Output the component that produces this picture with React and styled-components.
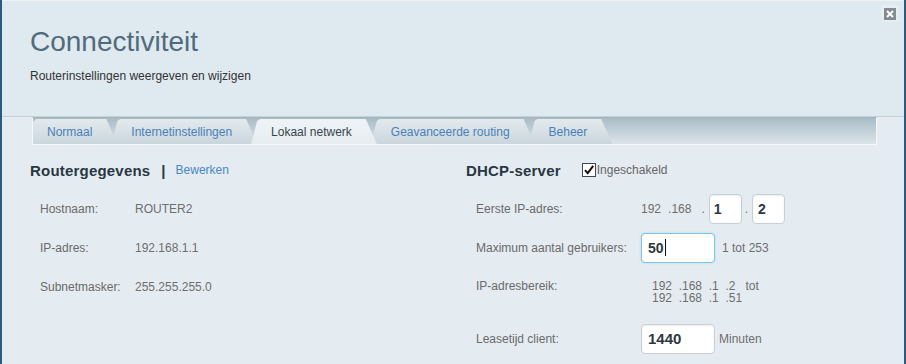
import React from "react";
import styled, { createGlobalStyle } from "styled-components";

const GlobalStyle = createGlobalStyle`
  body {
    margin: 0;
    font-family: "Liberation Sans", Arial, sans-serif;
    background: #e4ecf1;
  }
`;

const Frame = styled.div`
  width: 906px;
  height: 364px;
  box-sizing: border-box;
  border-left: 2px solid #2b5a84;
  border-right: 2px solid #2b5a84;
  background: #e4ecf1;
  overflow: hidden;
`;

const Header = styled.div`
  position: relative;
  height: 117px;
  box-sizing: border-box;
  padding: 25px 28px 0;
  background: #dfe9f0;
  border-top: 1px solid #eef3f6;
  border-bottom: 1px solid #c3d1d9;
`;

const Title = styled.h1`
  margin: 0;
  font-size: 28px;
  line-height: 32px;
  font-weight: 400;
  color: #516b7b;
`;

const Subtitle = styled.div`
  margin-top: 11px;
  font-size: 12px;
  line-height: 14px;
  color: #333;
`;

const CloseButton = styled.div`
  position: absolute;
  top: 4px;
  right: 5px;
  width: 18px;
  height: 17px;
  display: flex;
  align-items: center;
  justify-content: center;
  border-radius: 2px;
  background: #e6eef3;
`;

const TabBar = styled.div`
  display: flex;
  align-items: flex-end;
  margin-left: 30px;
  width: 845px;
  height: 28px;
  box-sizing: border-box;
  padding: 2px 0 0 0;
  border: 1px solid #f5f8fa;
  border-top: 1px solid #a3b6c0;
  background: linear-gradient(#a9bcc6, #dbe4e9);
`;

const Tab = styled.div`
  position: relative;
  z-index: ${({ $active, $index }) => ($active ? 10 : 5 - $index)};
  height: 25px;
  display: flex;
  align-items: center;
  padding: 0 25px 0 ${({ $first }) => ($first ? "14px" : "20px")};
  margin-left: ${({ $first }) => ($first ? "0" : "-6px")};
  font-size: 12px;
  color: ${({ $active }) => ($active ? "#38444e" : "#4a80b8")};
  background: ${({ $active }) =>
    $active
      ? "linear-gradient(#eef3f6, #e6edf1)"
      : "linear-gradient(#e3eaee, #cad6dd)"};
  clip-path: ${({ $first }) =>
    $first
      ? "polygon(0 100%, 0 3px, 3px 0, calc(100% - 11px) 0, 100% 100%)"
      : "polygon(0 100%, 6px 2px, 9px 0, calc(100% - 11px) 0, 100% 100%)"};
`;

const Content = styled.div`
  display: flex;
  padding: 15px 28px 0;
`;

const Column = styled.div`
  width: ${({ $width }) => $width || "auto"};
  flex: ${({ $width }) => ($width ? "none" : "1")};
`;

const SectionHead = styled.div`
  display: flex;
  align-items: center;
  height: 20px;
  margin-bottom: 9px;
`;

const SectionTitle = styled.span`
  font-size: 15px;
  font-weight: 700;
  letter-spacing: 0.2px;
  color: #2a3742;
`;

const Divider = styled.span`
  margin: 0 10px 0 11px;
  font-size: 15px;
  font-weight: 700;
  color: #2a3742;
`;

const Link = styled.a`
  font-size: 12px;
  color: #4a86c3;
  text-decoration: none;
`;

const Toggle = styled.label`
  display: flex;
  align-items: center;
  margin-left: 21px;
  font-size: 12px;
  color: #666;
  gap: 1px;
`;

const Row = styled.div`
  display: grid;
  grid-template-columns: ${({ $label }) => $label} auto;
  align-items: ${({ $top }) => ($top ? "start" : "center")};
  height: ${({ $h }) => $h || "39px"};
  padding-left: 10px;
`;

const Label = styled.div`
  font-size: 12px;
  line-height: 14px;
  color: #6a6a6a;
  padding-top: ${({ $pad }) => $pad || "0"};
`;

const Value = styled.div`
  display: flex;
  align-items: center;
  font-size: 12px;
  line-height: 14px;
  color: #6e6e6e;
  white-space: pre;
`;

const Range = styled.div`
  margin: 13px 0 0 11px;
  font-size: 12px;
  line-height: 12px;
  color: #6e6e6e;
  white-space: pre;
`;

const Field = styled.div`
  display: flex;
  align-items: center;
  width: ${({ $width }) => $width};
  height: 30px;
  box-sizing: border-box;
  padding-left: ${({ $pad }) => $pad || "6px"};
  border: 1px solid ${({ $focused }) => ($focused ? "#79c6e6" : "#c6cfd5")};
  border-radius: 4px;
  background: #fff;
  box-shadow: ${({ $focused }) =>
    $focused
      ? "0 0 2px rgba(121, 198, 230, 0.6)"
      : "inset 0 1px 2px rgba(0, 0, 0, 0.08)"};
  font-size: ${({ $size }) => $size || "14px"};
  font-weight: 700;
  color: #2f3840;
`;

const Caret = styled.span`
  width: 1px;
  height: 17px;
  margin-left: 1px;
  background: #111;
`;

const Dot = styled.span`
  margin: ${({ $gap }) => $gap || "0"};
`;

const Hint = styled.span`
  margin-left: ${({ $gap }) => $gap};
  font-size: 12px;
  color: #6e6e6e;
`;

const tabs = [
  "Normaal",
  "Internetinstellingen",
  "Lokaal netwerk",
  "Geavanceerde routing",
  "Beheer",
];

const routerInfo = [
  ["Hostnaam:", "ROUTER2"],
  ["IP-adres:", "192.168.1.1"],
  ["Subnetmasker:", "255.255.255.0"],
];

const CheckBox = () => (
  <svg width="14" height="14" viewBox="0 0 14 14">
    <rect x="0.5" y="0.5" width="13" height="13" fill="#fff" stroke="#3f4850" />
    <path d="M3 7.2 L5.7 10.2 L11.2 2.8" fill="none" stroke="#111" strokeWidth="2" />
  </svg>
);

const CloseIcon = () => (
  <svg width="12" height="12" viewBox="0 0 12 12">
    <rect width="12" height="12" fill="#838c93" />
    <path d="M3 3 L9 9 M9 3 L3 9" stroke="#fff" strokeWidth="2" />
  </svg>
);

export default function App() {
  return (
    <>
      <GlobalStyle />
      <Frame>
        <Header>
          <Title>Connectiviteit</Title>
          <Subtitle>Routerinstellingen weergeven en wijzigen</Subtitle>
          <CloseButton>
            <CloseIcon />
          </CloseButton>
        </Header>

        <TabBar>
          {tabs.map((tab, i) => (
            <Tab key={tab} $first={i === 0} $index={i} $active={i === 2}>
              {tab}
            </Tab>
          ))}
        </TabBar>

        <Content>
          <Column $width="436px">
            <SectionHead>
              <SectionTitle>Routergegevens</SectionTitle>
              <Divider>|</Divider>
              <Link href="#">Bewerken</Link>
            </SectionHead>
            {routerInfo.map(([label, value]) => (
              <Row key={label} $label="95px">
                <Label>{label}</Label>
                <Value>{value}</Value>
              </Row>
            ))}
          </Column>

          <Column>
            <SectionHead>
              <SectionTitle>DHCP-server</SectionTitle>
              <Toggle>
                <CheckBox />
                Ingeschakeld
              </Toggle>
            </SectionHead>

            <Row $label="165px">
              <Label>Eerste IP-adres:</Label>
              <Value>
                <span>192</span>
                <Dot $gap="0 0 0 7px">.</Dot>
                <span>168</span>
                <Dot $gap="0 4px 0 10px">.</Dot>
                <Field $width="33px" $pad="4px">1</Field>
                <Dot $gap="0 4px 0 3px">.</Dot>
                <Field $width="33px" $pad="5px">2</Field>
              </Value>
            </Row>

            <Row $label="165px">
              <Label>Maximum aantal gebruikers:</Label>
              <Value>
                <Field $width="74px" $focused>
                  50
                  <Caret />
                </Field>
                <Hint $gap="7px">1 tot 253</Hint>
              </Value>
            </Row>

            <Row $label="165px" $top $h="52px">
              <Label $pad="12px">IP-adresbereik:</Label>
              <Range>
                {"192  .168  .1  .2   tot\n192  .168  .1  .51"}
              </Range>
            </Row>

            <Row $label="165px">
              <Label>Leasetijd client:</Label>
              <Value>
                <Field $width="74px" $size="15px">1440</Field>
                <Hint $gap="4px">Minuten</Hint>
              </Value>
            </Row>
          </Column>
        </Content>
      </Frame>
    </>
  );
}
